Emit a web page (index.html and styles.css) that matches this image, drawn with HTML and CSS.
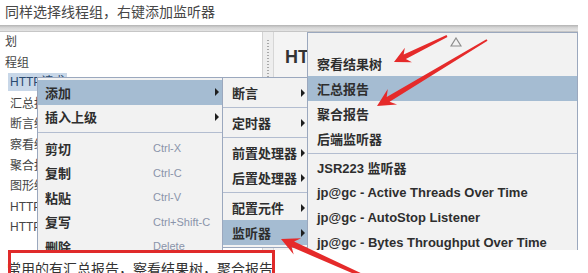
FILE: index.html
```html
<!DOCTYPE html>
<html lang="zh">
<head>
<meta charset="utf-8">
<link rel="stylesheet" href="styles.css">
</head>
<body>
<div class="caption">同样选择线程组，右键添加监听器</div>
<div class="shot">
  <div class="window">
    <div class="topbar"></div>
    <div class="panes">
      <div class="tree">
        <div class="node top">划</div>
        <div class="node top">程组</div>
        <div class="node selrow"><span class="sel">HTTP请求</span></div>
        <div class="node">汇总报告</div>
        <div class="node">断言结果</div>
        <div class="node">察看结果树</div>
        <div class="node">聚合报告</div>
        <div class="node">图形结果</div>
        <div class="node">HTTP Cookie 管理器</div>
        <div class="node">HTTP信息头管理器</div>
      </div>
      <div class="divider"></div>
      <div class="right"><div class="title">HTTP请求</div></div>
    </div>
  </div>

  <div class="menu m1">
    <div class="item sub hl"><span class="label">添加</span></div>
    <div class="item sub"><span class="label">插入上级</span></div>
    <div class="sep"></div>
    <div class="item"><span class="label">剪切</span><span class="key">Ctrl-X</span></div>
    <div class="item"><span class="label">复制</span><span class="key">Ctrl-C</span></div>
    <div class="item"><span class="label">粘贴</span><span class="key">Ctrl-V</span></div>
    <div class="item"><span class="label">复写</span><span class="key">Ctrl+Shift-C</span></div>
    <div class="item"><span class="label">删除</span><span class="key">Delete</span></div>
  </div>

  <div class="menu m2">
    <div class="item sub">断言</div>
    <div class="sep"></div>
    <div class="item sub">定时器</div>
    <div class="sep"></div>
    <div class="item sub">前置处理器</div>
    <div class="item sub">后置处理器</div>
    <div class="sep"></div>
    <div class="item sub">配置元件</div>
    <div class="item sub hl">监听器</div>
  </div>

  <div class="menu m3">
    <div class="scroll">
      <svg width="12" height="10" viewBox="0 0 12 10"><polygon points="6,1 11,9 1,9" fill="none" stroke="#8c8c8c" stroke-width="1.2"/></svg>
    </div>
    <div class="item">察看结果树</div>
    <div class="item hl">汇总报告</div>
    <div class="item">聚合报告</div>
    <div class="item">后端监听器</div>
    <div class="sep"></div>
    <div class="item">JSR223 监听器</div>
    <div class="item">jp@gc - Active Threads Over Time</div>
    <div class="item">jp@gc - AutoStop Listener</div>
    <div class="item">jp@gc - Bytes Throughput Over Time</div>
  </div>
</div>

<div class="note">
  <div class="note-text">常用的有汇总报告，察看结果树，聚合报告</div>
  <div class="redbox"></div>
</div>

<svg class="arrows" width="588" height="273" viewBox="0 0 588 273">
  <polygon fill="#e52a2a" points="446.56,35.1 403.68,54.47 404.85,47.78 394,62 411.89,62.14 405.88,58.97 447.44,36.9"/>
  <polygon fill="#e52a2a" points="486.49,39.14 386.71,96.91 387.80,89.02 377,106 397.06,104.46 389.59,101.71 487.51,40.86"/>
  <polygon fill="#e52a2a" points="372.62,278.63 294.08,241.61 301.11,238.18 281,239 293.71,254.60 291.62,247.08 371.38,281.37"/>
</svg>
</body>
</html>
```

FILE: styles.css
```css
* { box-sizing: border-box; margin: 0; padding: 0; }

html, body {
  width: 588px;
  height: 273px;
  overflow: hidden;
  background: #fff;
}

body {
  position: relative;
  font-family: "Liberation Sans", "Noto Sans CJK SC", sans-serif;
  color: #333;
}

.caption {
  height: 25px;
  line-height: 25px;
  padding-left: 5px;
  font-size: 14px;
  color: #474747;
  white-space: nowrap;
}

.shot {
  position: relative;
  height: 225px;
  overflow: hidden;
}

.window {
  width: 578px;
  height: 225px;
  display: flex;
  flex-direction: column;
}

.topbar {
  height: 7px;
  background: linear-gradient(#b3b3b3, #d6d6d6 45%, #e4e4e4);
  border-bottom: 1px solid #c6c6c6;
}

.panes {
  flex: 1;
  display: flex;
}

.tree {
  width: 263px;
  background: #fff;
  font-size: 12px;
  border-right: 1px solid #d2d2d2;
  overflow: hidden;
}

.node {
  height: 20.6px;
  line-height: 20.6px;
  padding-left: 10px;
  white-space: nowrap;
  color: #454545;
}

.node.top { padding-left: 5px; }
.node.selrow { padding-left: 8px; line-height: 16px; }

.sel {
  display: inline-block;
  background: #c8d7e8;
  color: #2a4a70;
  padding: 0 2px;
  line-height: 18px;
}

.divider {
  width: 10px;
  background: #eeeeee;
  display: flex;
  justify-content: center;
}

.divider::before {
  content: "";
  width: 2px;
  margin-top: 8px;
  height: 72px;
  background: repeating-linear-gradient(#a8a8a8 0 1px, transparent 1px 3px);
}

.right {
  flex: 1;
  background: #f4f4f4;
  border-left: 1px solid #d6d6d6;
  padding: 10px 0 0 11px;
  overflow: hidden;
}

.title {
  font-size: 18px;
  font-weight: bold;
  color: #333;
  white-space: nowrap;
}

/* context menus */
.menu {
  position: absolute;
  background: #f2f2f2;
  border: 1px solid #9ba8be;
  font-size: 13px;
  font-weight: bold;
  color: #2e2e2e;
}

.m1 { left: 37px; top: 52px; width: 186px; height: 200px; padding-top: 2px; }
.m2 { left: 222px; top: 52px; width: 86px; padding: 2px 0; }
.m3 { left: 307px; top: 7px; width: 271px; height: 230px; }

.item {
  position: relative;
  height: 25px;
  display: flex;
  align-items: center;
  padding-left: 9px;
  white-space: nowrap;
}

.m1 .item { height: 24.5px; padding-left: 7px; }

.item.hl { background: #a5bcd2; }

.item.sub::after {
  content: "";
  position: absolute;
  right: 3px;
  top: 50%;
  margin-top: -4px;
  border-left: 4px solid #1e1e1e;
  border-top: 4px solid transparent;
  border-bottom: 4px solid transparent;
}

.m2 .item.sub::after { right: 2px; }

.sep {
  height: 5px;
  display: flex;
  align-items: center;
}

.sep::before {
  content: "";
  flex: 1;
  height: 1px;
  background: #b3bdd0;
}

.m1 .sep { height: 7px; }
.m3 .sep { height: 4px; }

.label { width: 108px; }

.key {
  font-size: 11px;
  font-weight: normal;
  color: #8a94aa;
}

.scroll {
  height: 18px;
  display: flex;
  align-items: center;
  padding-left: 142px;
}

/* annotation */
.note {
  position: relative;
  height: 23px;
  overflow: hidden;
}

.note-text {
  padding: 12px 0 0 7px;
  font-size: 14px;
  line-height: 14px;
  color: #333;
  white-space: nowrap;
}

.redbox {
  position: absolute;
  left: 8px;
  top: 0;
  width: 267px;
  height: 40px;
  border: 3px solid #e02a2a;
}

.arrows {
  position: absolute;
  left: 0;
  top: 0;
  pointer-events: none;
}
```
